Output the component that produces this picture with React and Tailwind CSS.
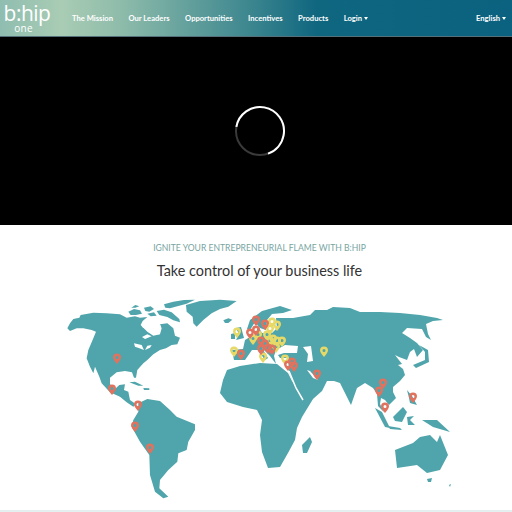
const land = {
  na: "22,100 30,85 40,72 58,68 62,60 100,53 140,55 180,58 200,68 225,64 240,68 262,66 248,78 242,90 262,110 280,122 300,118 305,100 300,88 322,85 340,100 345,122 360,128 352,148 335,150 318,160 300,165 280,178 262,195 250,205 232,225 228,248 222,248 216,232 195,228 170,232 150,248 150,268 165,282 178,270 195,268 192,285 205,290 210,315 228,328 220,335 200,322 180,305 150,292 125,265 118,245 105,215 100,235 90,215 80,190 85,165 100,130 108,110 95,105 70,100 50,100 30,108",
  a1: "205,50 222,42 240,46 246,56 228,60 212,60",
  a2: "252,38 272,34 282,42 268,50 256,48",
  a3: "312,28 340,20 372,15 405,14 380,26 352,34 330,40 316,38",
  a4: "290,48 312,44 335,52 358,72 360,82 340,76 322,66 298,60",
  a5: "262,56 282,52 290,62 272,64",
  a6: "214,38 226,30 238,34 226,38",
  greenland: "378,30 420,18 480,14 530,18 505,35 480,42 455,55 430,75 410,95 400,85 398,65 380,50",
  iceland: "490,76 505,70 517,74 505,84 495,84",
  cuba: "208,262 225,260 250,272 235,272",
  hisp: "250,279 268,280 268,285 252,285",
  sa: "235,325 262,312 300,318 330,345 350,365 405,388 405,405 385,440 380,465 355,475 352,500 325,525 300,555 298,580 325,605 310,610 285,590 270,540 268,480 240,440 215,395 220,375 235,350",
};
const eurasia = "232,350 243,349 245,340 250,337 256,333 258,326 262,333 272,333 277,328 276,318 280,318 293,318 310,315 315,310 327,310 333,307 350,308 360,312 380,312 400,313 420,315 437,318 443,320 433,321 426,324 428,334 431,340 426,337 422,329 407,328 402,333 410,338 417,343 423,350 417,357 414,349 410,352 407,360 399,357 395,355 402,364 398,365 403,369 405,375 400,381 393,387 393,392 396,398 389,405 385,400 381,398 380,404 384,412 378,406 377,394 373,388 365,383 357,388 351,405 345,393 340,383 334,381 327,381 322,391 313,399 303,402 296,390 289,372 288,358 280,358 278,355 284,353 297,353 298,346 285,345 276,350 274,356 276,364 270,356 266,352 262,348 268,358 265,360 258,350 252,350 245,360 234,360";
const others = {
  scand: "247,329 250,320 262,311 280,306 292,310 283,313 272,314 267,320 266,330 260,328 255,322 250,330",
  uk: "236,328 241,327 244,338 236,340 239,334",
  ireland: "231,334 235,333 235,339 231,339",
  africa: "227,370 240,366 260,363 277,364 288,373 292,381 303,397 313,399 302,417 297,428 295,440 288,453 280,467 268,468 262,452 260,435 262,420 257,410 243,407 227,402 220,393 223,380",
  mad: "303,453 302,445 310,437 312,442 307,453",
  aus: "395,450 413,443 420,437 430,435 437,442 440,435 448,455 440,470 427,473 417,465 397,468",
  tas: "427,479 432,478 431,482 428,482",
  borneo: "393,417 403,407 407,412 402,422 395,421",
  sumatra: "375,408 382,412 390,428 385,427",
  java: "388,426 400,428 402,430 390,429",
  sula: "407,417 414,416 410,420 415,425 408,425",
  guinea: "422,420 437,420 450,432 433,427",
  phil: "407,390 412,396 417,405 410,403 409,398",
  japan: "413,365 425,360 425,352 419,345 428,350 429,362 416,368",
  nz: "449,485 451,484 450,487",
};
const cutouts = [
  "245,95 270,80 300,88 303,100 298,118 280,118 262,105",
  "222,145 245,150 252,165 238,160 225,155",
  "255,165 270,158 275,150 262,152",
  "246,126 262,118 275,124 255,132",
];
const red = [[117,359],[112,390],[138,406],[135,427],[150,449],[241,355],[256,321],[265,325],[250,334],[256,331],[261,342],[265,345],[261,350],[268,349],[272,350],[288,366],[292,363],[294,367],[317,375],[383,384],[379,392],[385,408],[413,398]];
const yellow = [[272,323],[277,326],[270,330],[237,333],[253,340],[258,336],[267,336],[273,340],[270,342],[277,342],[282,342],[276,348],[263,358],[234,352],[285,360],[324,352]];

const Pin = ({ x, y, c }) => (
  <path d={`M${x} ${y + 5}C${x - 2} ${y + 2.5} ${x - 4} ${y} ${x - 4} ${y - 1.5}A4 4 0 1 1 ${x + 4} ${y - 1.5}C${x + 4} ${y} ${x + 2} ${y + 2.5} ${x} ${y + 5}ZM${x} ${y - 3}A1.5 1.5 0 1 0 ${x} ${y}A1.5 1.5 0 1 0 ${x} ${y - 3}Z`} fill={c} fillRule="evenodd" />
);

const links = ["The Mission", "Our Leaders", "Opportunities", "Incentives", "Products"];
const Caret = () => <span className="ml-[2px] inline-block align-[1px] border-x-[2.5px] border-t-[3px] border-x-transparent border-t-white" />;

export default function App() {
  return (
    <div className="h-[512px] w-[512px] overflow-hidden bg-white font-['Lato','Liberation_Sans',sans-serif]">
      <header className="flex h-[37px] items-center justify-between border-b border-[#55707a] bg-[linear-gradient(90deg,#8fbdb0_0%,#a9ccb4_12%,#8dbbaa_24%,#3f8890_48%,#0f667f_62%,#0b6280_100%)] pr-[6px] text-[7.6px] font-bold text-white">
        <div className="flex items-center">
          <div className="flex w-[72px] flex-col items-center pr-[18px] font-['Open_Sans',sans-serif] leading-none">
            <span className="text-[21px] font-medium leading-[21px] tracking-[-0.5px]">b:hip</span>
            <span className="-ml-[7px] text-[10px] font-normal leading-[9px] tracking-[0.3px]">one</span>
          </div>
          <nav className="flex items-center gap-[15.5px] pt-px">
            {links.map((l) => <span key={l}>{l}</span>)}
            <span>Login<Caret /></span>
          </nav>
        </div>
        <span className="pt-px">English<Caret /></span>
      </header>
      <div className="flex h-[188px] items-center justify-center bg-black">
        <svg width="52" height="52" viewBox="0 0 52 52" className="ml-[7px]">
          <circle cx="26" cy="26" r="24" fill="none" stroke="#3a3a3a" strokeWidth="2" />
          <circle cx="26" cy="26" r="24" fill="none" stroke="#fff" strokeWidth="2" strokeDasharray="100 51" transform="rotate(-170 26 26)" />
        </svg>
      </div>
      <section className="flex flex-col items-center pl-[7px] pt-[17px]">
        <p className="text-[8.6px] leading-[12px] text-[#78a5a1]">IGNITE YOUR ENTREPRENEURIAL FLAME WITH B:HIP</p>
        <h2 className="mt-[6px] text-[14.4px] leading-[22px] text-[#333]">Take control of your business life</h2>
      </section>
      <svg width="512" height="209" viewBox="0 295 512 209" className="mt-[13px] block">
        <g fill="#4fa5ab">
          <g transform="translate(60 295) scale(0.3333)">
            {Object.values(land).map((p) => <polygon key={p} points={p} />)}
          </g>
          <polygon points={eurasia} />
          {Object.values(others).map((p) => <polygon key={p} points={p} />)}
        </g>
        <g fill="#fff" transform="translate(60 295) scale(0.3333)">
          {cutouts.map((p) => <polygon key={p} points={p} />)}
        </g>
        <polygon fill="#fff" points="303,347 311,346 313,361 307,362 308,354" />
        <polygon fill="#fff" points="307,370 310,371 318,380 313,378" />
        <polyline fill="none" stroke="#fff" strokeWidth="1.5" points="289,371 296,388 303,400" />
        {yellow.map(([x, y]) => <Pin key={`y${x}-${y}`} x={x} y={y} c="#e6d968" />)}
        {red.map(([x, y]) => <Pin key={`r${x}-${y}`} x={x} y={y} c="#e0735f" />)}
      </svg>
      <div className="mt-[6px] h-[2px] bg-[#e6efef]" />
    </div>
  );
}
